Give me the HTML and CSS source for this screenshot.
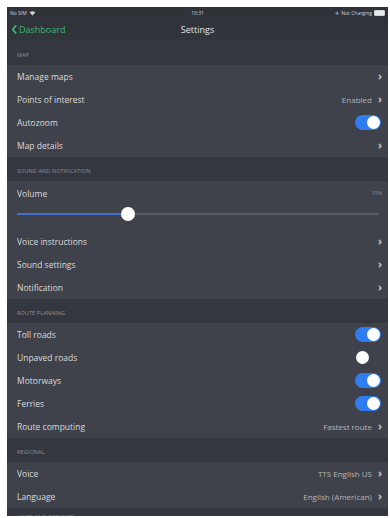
FILE: index.html
```html
<!DOCTYPE html>
<html>
<head>
<meta charset="utf-8">
<link rel="stylesheet" href="styles.css">
</head>
<body>
<div class="screen">
  <div class="status">
    <span class="st-left">No SIM <svg class="wifi" viewBox="0 0 10 8" width="7" height="6"><path d="M5 7.5L1 3.2A6 6 0 0 1 9 3.2Z" fill="#cfd1d6"/></svg></span>
    <span class="st-time">10:31</span>
    <span class="st-right"><span class="plane">✈</span> Not Charging <span class="battery"><span class="batfill"></span></span></span>
  </div>
  <div class="nav">
    <span class="back"><svg viewBox="0 0 6 10" width="6" height="9"><path d="M5 1L1.5 5L5 9" fill="none" stroke="#3cb878" stroke-width="1.8" stroke-linecap="round" stroke-linejoin="round"/></svg>Dashboard</span>
    <span class="title">Settings</span>
  </div>

  <div class="section">Map</div>
  <div class="row"><span>Manage maps</span><span class="chev">›</span></div>
  <div class="row"><span>Points of interest</span><span class="right"><span class="val">Enabled</span><span class="chev">›</span></span></div>
  <div class="row"><span>Autozoom</span><span class="toggle on"><span class="knob"></span></span></div>
  <div class="row"><span>Map details</span><span class="chev">›</span></div>

  <div class="section">Sound and notification</div>
  <div class="volume">
    <div class="vol-top"><span>Volume</span><span class="pct">10%</span></div>
    <div class="slider"><div class="fill" style="width:111px"></div><div class="thumb"></div></div>
  </div>
  <div class="row"><span>Voice instructions</span><span class="chev">›</span></div>
  <div class="row"><span>Sound settings</span><span class="chev">›</span></div>
  <div class="row"><span>Notification</span><span class="chev">›</span></div>

  <div class="section">Route planning</div>
  <div class="row"><span>Toll roads</span><span class="toggle on"><span class="knob"></span></span></div>
  <div class="row"><span>Unpaved roads</span><span class="toggle"><span class="knob"></span></span></div>
  <div class="row"><span>Motorways</span><span class="toggle on"><span class="knob"></span></span></div>
  <div class="row"><span>Ferries</span><span class="toggle on"><span class="knob"></span></span></div>
  <div class="row"><span>Route computing</span><span class="right"><span class="val">Fastest route</span><span class="chev">›</span></span></div>

  <div class="section">Regional</div>
  <div class="row"><span>Voice</span><span class="right"><span class="val">TTS English US</span><span class="chev">›</span></span></div>
  <div class="row"><span>Language</span><span class="right"><span class="val">English (American)</span><span class="chev">›</span></span></div>

  <div class="section last">Units and formats</div>
</div>
</body>
</html>
```

FILE: styles.css
```css
html, body {
  height: 100%;
  overflow: hidden;
}
body {
  margin: 7px 2px 0 7px;
  background: #ffffff;
  font-family: "Open Sans", "Liberation Sans", sans-serif;
}
.screen {
  background: #3f424b;
  color: #d8dadf;
  font-size: 8.5px;
  height: 509px;
  overflow: hidden;
}
.status {
  background: #2f3239;
  height: 11px;
  display: flex;
  align-items: center;
  justify-content: space-between;
  padding: 0 3px;
  font-size: 5px;
  color: #cfd1d6;
  position: relative;
}
.st-left { display: flex; align-items: center; gap: 2px; }
.st-time { position: absolute; left: 0; right: 0; text-align: center; }
.st-right { display: flex; align-items: center; gap: 2px; position: relative; }
.plane { font-size: 5px; }
.battery {
  display: inline-block;
  width: 9px;
  height: 4px;
  border: 1px solid #cfd1d6;
  border-radius: 1px;
  box-sizing: content-box;
}
.batfill { display: block; width: 100%; height: 100%; background: #e8e9ec; }
.nav {
  background: linear-gradient(#2f3239, #32353c);
  height: 23px;
  display: flex;
  align-items: center;
  position: relative;
  padding-left: 4px;
}
.back {
  color: #3cb878;
  display: flex;
  align-items: center;
  gap: 2px;
  font-size: 9px;
  position: relative;
  z-index: 1;
}
.title {
  position: absolute;
  left: 0;
  right: 0;
  text-align: center;
  font-size: 9px;
  color: #e4e6ea;
}
.section {
  background: #34373f;
  height: 24px;
  box-sizing: border-box;
  padding: 4px 0 0 10px;
  display: flex;
  align-items: center;
  text-transform: uppercase;
  font-size: 5.5px;
  color: #8d9098;
  letter-spacing: 0.1px;
}
.section.last {
  align-items: flex-start;
  padding-top: 5px;
}
.row {
  height: 23px;
  display: flex;
  align-items: center;
  justify-content: space-between;
  padding: 0 6px 0 10px;
}
.right { display: flex; align-items: center; gap: 6px; }
.val { color: #b1b4ba; font-size: 8px; }
.chev {
  color: #c4c6cb;
  font-weight: bold;
  font-size: 11px;
  line-height: 1;
  margin-top: -2px;
}
.toggle {
  width: 26px;
  height: 15px;
  border-radius: 8px;
  position: relative;
  margin-right: 1px;
}
.toggle.on { background: #2f7df0; }
.knob {
  position: absolute;
  top: 1px;
  left: 1px;
  width: 13px;
  height: 13px;
  border-radius: 50%;
  background: #ffffff;
}
.toggle.on .knob { left: 12px; }
.volume {
  height: 49px;
  padding: 0 6px 0 10px;
  display: flex;
  flex-direction: column;
}
.vol-top {
  height: 24px;
  display: flex;
  align-items: center;
  justify-content: space-between;
}
.pct { font-size: 5.5px; color: #8d9098; }
.slider {
  position: relative;
  height: 2px;
  background: #575a63;
  margin-top: 8px;
  margin-right: 3px;
}
.fill { height: 2px; background: #3d6fd0; }
.thumb {
  position: absolute;
  left: 104px;
  top: -6px;
  width: 14px;
  height: 14px;
  border-radius: 50%;
  background: #ffffff;
}
```
